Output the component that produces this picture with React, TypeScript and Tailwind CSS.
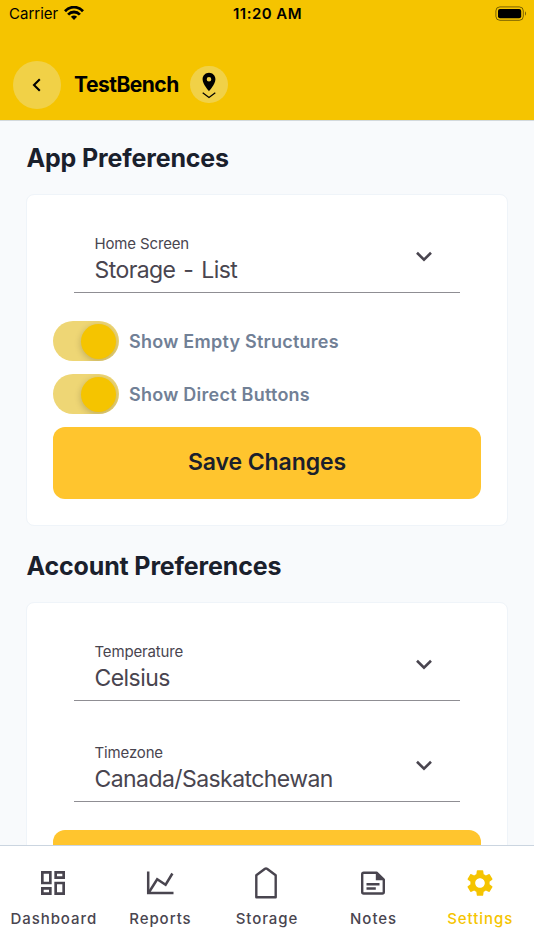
import { useState } from "react";
import type { ReactNode } from "react";
import { MdOutlineDashboard, MdSettings, MdPlace } from "react-icons/md";

function StatusBar() {
  return (
    <div className="flex h-7 items-center justify-between pl-[9px] pr-[7px] text-[15px] text-black">
      <div className="flex flex-1 items-center gap-[6px]">
        <span>Carrier</span>
        <svg className="mb-[2px] h-[14px] w-[20px]" viewBox="0 0 20 14" fill="none" stroke="currentColor" strokeWidth="2.8">
          <path d="M1 5.2C6 -0.2 14 -0.2 19 5.2" />
          <path d="M4.1 8.6C7.4 5.1 12.6 5.1 15.9 8.6" />
          <path d="M10 14L6.9 10.8C8.7 9.1 11.3 9.1 13.1 10.8Z" fill="currentColor" stroke="none" />
        </svg>
      </div>
      <span className="mr-px font-semibold tracking-[0.45px]">11:20 AM</span>
      <div className="flex flex-1 justify-end">
        <svg className="mb-[2px] h-[15px] w-[32px]" viewBox="0 0 32 15">
          <rect x="0.9" y="0.9" width="27.4" height="13.4" rx="4" fill="none" stroke="black" strokeOpacity="0.5" strokeWidth="1" />
          <rect x="3" y="3" width="23.2" height="9.2" rx="2" />
          <path d="M30 5.3C31.4 6 31.4 9 30 9.7Z" fillOpacity="0.5" />
        </svg>
      </div>
    </div>
  );
}

function Header() {
  return (
    <header className="h-[121px] shrink-0 border-b border-[#d3d9dc] bg-[#f5c400]">
      <StatusBar />
      <div className="flex h-[113px] items-center pl-[13px]">
        <button className="flex size-12 items-center justify-center rounded-full bg-[#f1d147]">
          <svg className="size-4" viewBox="0 0 16 16" fill="none" stroke="black" strokeWidth="2.1">
            <path d="M10.8 2.3L5 8L10.8 13.7" />
          </svg>
        </button>
        <h1 className="ml-[13px] w-[104px] whitespace-nowrap text-[21px] font-bold tracking-[-0.5px] text-black">TestBench</h1>
        <button className="ml-3 flex h-[37px] w-[38px] flex-col items-center rounded-full bg-[#f1d147] pt-[5px]">
          <MdPlace className="size-[22px]" />
          <svg className="-mt-px h-[7px] w-[14px]" viewBox="0 0 14 7" fill="none" stroke="black" strokeWidth="1.2">
            <path d="M0.7 0.8L7 5.6L13.3 0.8" />
          </svg>
        </button>
      </div>
    </header>
  );
}

interface SelectFieldProps {
  label: string;
  value: string;
}

function SelectField({ label, value }: SelectFieldProps) {
  return (
    <div className="mx-[21px] flex h-[63px] items-start justify-between border-b border-[#8f8e93] pl-[20.5px] pr-7 text-[#49454f]">
      <div className="pt-px">
        <div className="text-[15px] leading-[26px] tracking-[-0.15px]">{label}</div>
        <div className="text-[23px] leading-[26px] tracking-[-0.57px] [word-spacing:2px]">{value}</div>
      </div>
      <svg className="mt-[21px] h-[11px] w-4" viewBox="0 0 16 11" fill="none" stroke="currentColor" strokeWidth="2.6">
        <path d="M1 1.8L8 8.7L15 1.8" />
      </svg>
    </div>
  );
}

function Toggle({ label }: { label: string }) {
  const [on, setOn] = useState(true);

  return (
    <div className="flex items-center gap-[10px]">
      <button
        onClick={() => setOn(!on)}
        className={`flex h-10 w-[66px] items-center overflow-hidden rounded-full px-[3px] ${on ? "justify-end bg-[#eed675]" : "justify-start bg-gray-200"}`}
      >
        <span className={`size-[35px] rounded-full shadow-[0_2px_7px_rgba(0,0,0,0.2)] ${on ? "bg-[#f5c400]" : "bg-white"}`} />
      </button>
      <span className="text-[18px] font-semibold tracking-[0.25px] text-[#718096]">{label}</span>
    </div>
  );
}

function SaveButton() {
  return (
    <button className="h-[72px] w-full rounded-xl bg-[#ffc52e] pb-px text-[23px] font-semibold tracking-[-0.1px] text-[#1a202c]">
      Save Changes
    </button>
  );
}

function Section({ title, children }: { title: string; children: ReactNode }) {
  return (
    <section>
      <h2 className="pl-[0.5px] text-[25px] leading-[36px] font-bold tracking-[-0.15px] text-[#1a202c]">{title}</h2>
      <div className="mt-[18px] rounded-lg border border-[#eff4f9] bg-white px-[26px] pb-[26px] pt-[35px]">
        {children}
      </div>
    </section>
  );
}

function ReportsIcon() {
  return (
    <svg className="size-8" viewBox="0 0 32 32" fill="none" stroke="currentColor" strokeWidth="2.5">
      <path d="M4.2 4.5V26.1H29.5" />
      <path d="M4.5 26L13.2 12.3L21.6 17.7L28.4 6.5" />
    </svg>
  );
}

function StorageIcon() {
  return (
    <svg className="size-8" viewBox="0 0 32 32" fill="none" stroke="currentColor" strokeWidth="2.4" strokeLinejoin="round">
      <path d="M6.3 30.2V8.3L15 1.8Q16 1.2 17 1.8L25.7 8.3V30.2Z" />
    </svg>
  );
}

function NotesIcon() {
  return (
    <svg className="size-8" viewBox="0 0 32 32" fill="none" stroke="currentColor" strokeWidth="2.4" strokeLinejoin="round">
      <path d="M6.7 5.7H19.6L26.8 12.6V25Q26.8 26.5 25.3 26.5H6.7Q5.2 26.5 5.2 25V7.2Q5.2 5.7 6.7 5.7Z" />
      <path d="M18.8 5V13.3H27.5Z" fill="currentColor" stroke="none" />
      <path d="M9.5 17.3H22.5M9.5 21.5H18.8" />
    </svg>
  );
}

const tabs = [
  { name: "Dashboard", icon: <MdOutlineDashboard className="size-8" /> },
  { name: "Reports", icon: <ReportsIcon /> },
  { name: "Storage", icon: <StorageIcon /> },
  { name: "Notes", icon: <NotesIcon /> },
  { name: "Settings", icon: <MdSettings className="size-8" /> },
];

function BottomNav() {
  return (
    <nav className="grid h-[105px] shrink-0 grid-cols-5 border-t border-[#cbd5e0] bg-white pr-px pt-[20.5px]">
      {tabs.map((tab) => (
        <button
          key={tab.name}
          className={`flex flex-col items-center ${tab.name === "Settings" ? "text-[#f5c400]" : "text-[#49454f]"}`}
        >
          {tab.icon}
          <span className="mt-2 pl-px text-[15px] leading-6 font-medium tracking-[0.95px]">{tab.name}</span>
        </button>
      ))}
    </nav>
  );
}

export default function App() {
  return (
    <div className="flex h-[950px] w-[534px] flex-col overflow-hidden bg-[#f8fafc] font-['Inter','Liberation_Sans',sans-serif]">
      <Header />
      <main className="flex min-h-0 flex-1 flex-col gap-[22px] overflow-hidden px-[26px] pt-[19px]">
        <Section title="App Preferences">
          <SelectField label="Home Screen" value="Storage - List" />
          <div className="mb-[13px] mt-7 flex flex-col gap-[13px]">
            <Toggle label="Show Empty Structures" />
            <Toggle label="Show Direct Buttons" />
          </div>
          <SaveButton />
        </Section>
        <Section title="Account Preferences">
          <div className="mb-7 flex flex-col gap-[37.5px]">
            <SelectField label="Temperature" value="Celsius" />
            <SelectField label="Timezone" value="Canada/Saskatchewan" />
          </div>
          <SaveButton />
        </Section>
      </main>
      <BottomNav />
    </div>
  );
}
